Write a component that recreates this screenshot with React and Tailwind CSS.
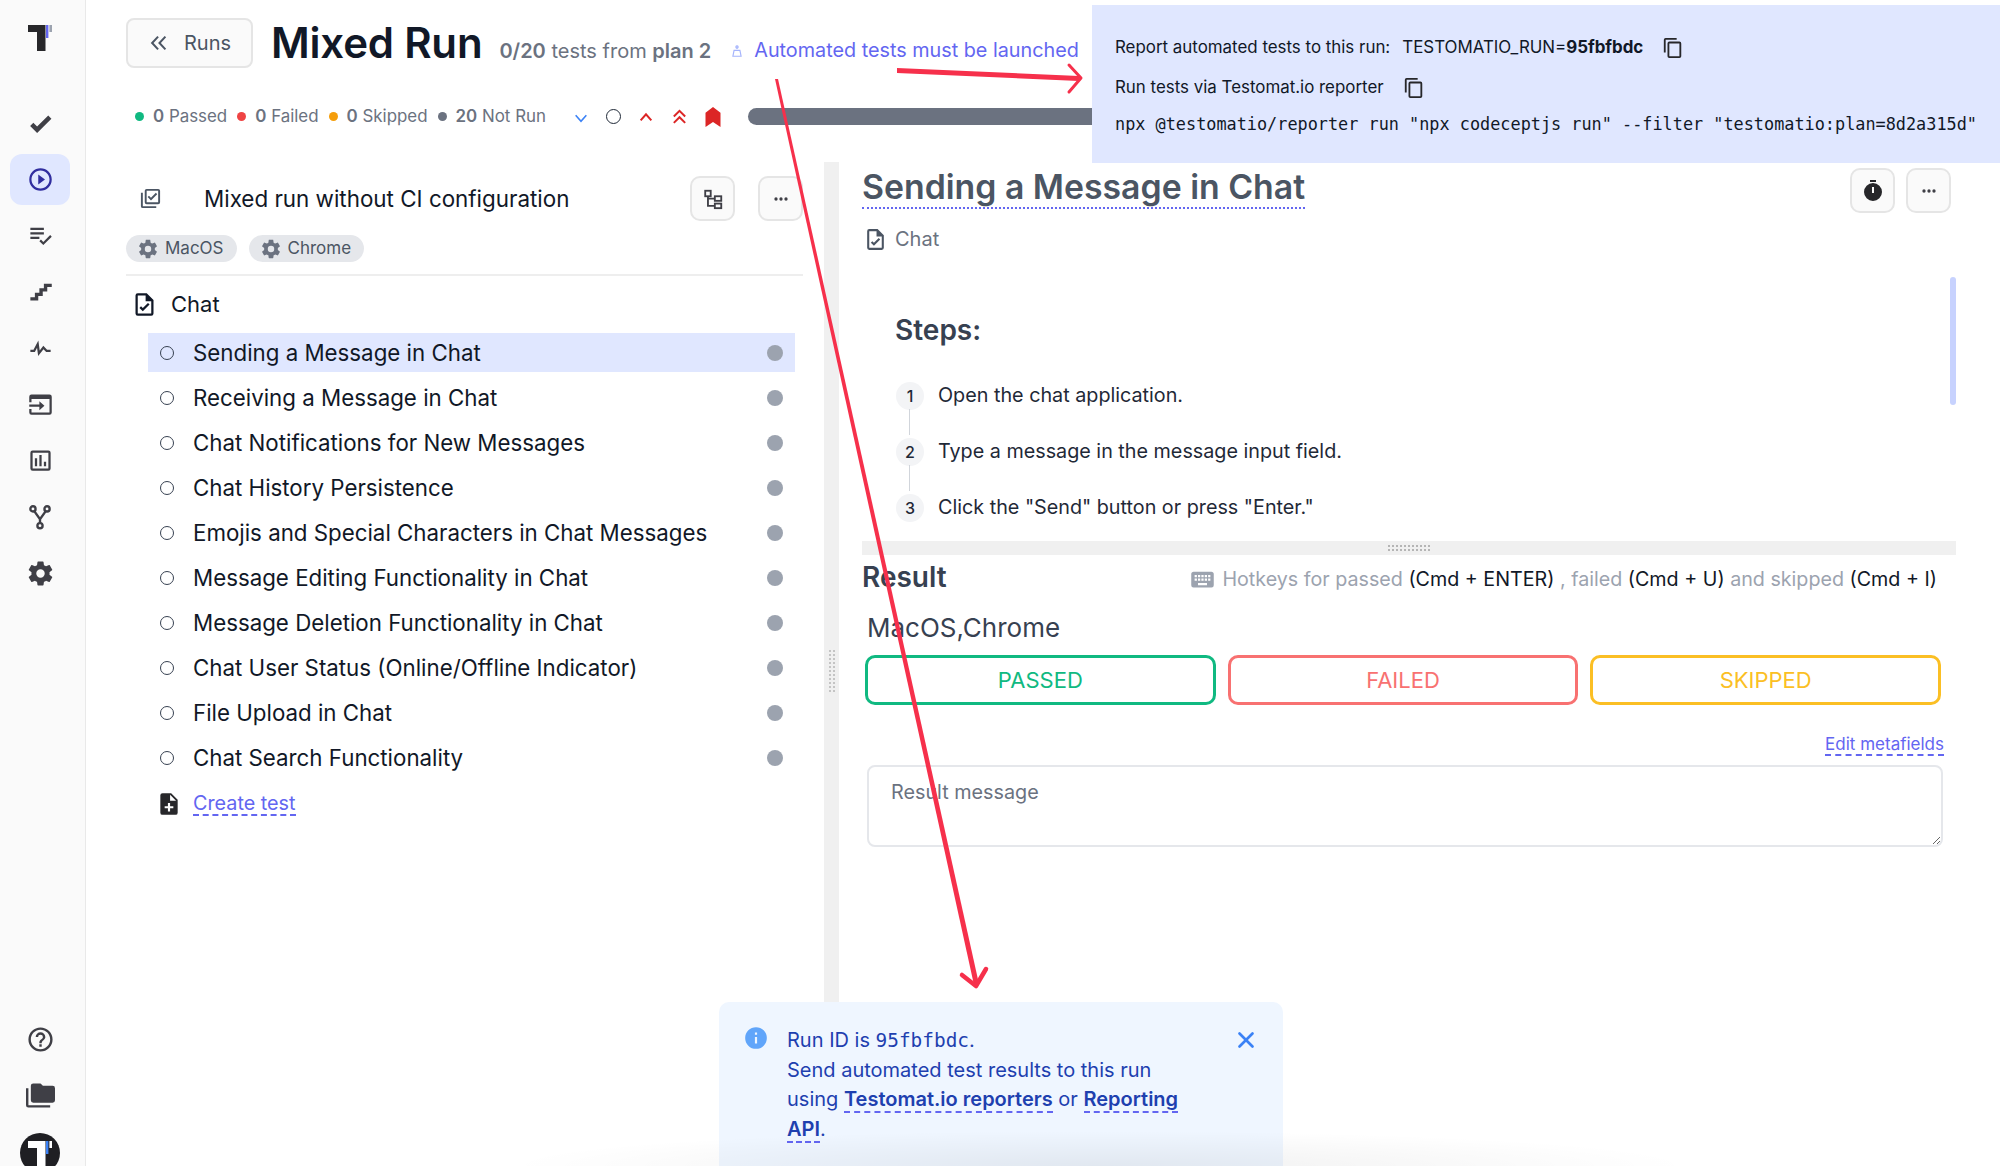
import React from 'react';
import { X } from 'lucide-react';

const M = ({ d, className = '' }) => (
  <svg viewBox="0 0 24 24" fill="currentColor" className={className}><path d={d} /></svg>
);
const P = {
  check: 'M9,20.42L2.79,14.21L5.62,11.38L9,14.77L18.88,4.88L21.71,7.71L9,20.42Z',
  play: 'M10,16.5L16,12L10,7.5V16.5M12,2A10,10 0 0,0 2,12A10,10 0 0,0 12,22A10,10 0 0,0 22,12A10,10 0 0,0 12,2M12,20C7.59,20 4,16.41 4,12C4,7.59 7.59,4 12,4C16.41,4 20,7.59 20,12C20,16.41 16.41,20 12,20Z',
  list: 'M3 5H15V7H3V5M3 9H15V11H3V9M3 13H11V15H3V13M14.5 20.5L11 17L12.4 15.6L14.5 17.7L20.6 11.6L22 13L14.5 20.5Z',
  stairs: 'M15,5V9H11V13H7V17H3V20H10V16H14V12H18V8H22V5H15Z',
  pulse: 'M3,13H5.79L10.1,4.79L11.28,13.75L14.5,9.66L17.83,13H21V15H17L14.67,12.67L9.92,18.73L8.94,11.31L7,15H3V13Z',
  importBox: 'M4 3H20A2 2 0 0 1 22 5V19A2 2 0 0 1 20 21H4A2 2 0 0 1 2 19V16H4V19H20V7H4V10H2V5A2 2 0 0 1 4 3M2 12H11V9L15.5 13L11 17V14H2V12Z',
  poll: 'M5 3H19A2 2 0 0 1 21 5V19A2 2 0 0 1 19 21H5A2 2 0 0 1 3 19V5A2 2 0 0 1 5 3M5 5V19H19V5H5M7 10H9V17H7V10M11 7H13V17H11V7M15 13H17V17H15V13Z',
  cog: 'M12,15.5A3.5,3.5 0 0,1 8.5,12A3.5,3.5 0 0,1 12,8.5A3.5,3.5 0 0,1 15.5,12A3.5,3.5 0 0,1 12,15.5M19.43,12.97C19.47,12.65 19.5,12.33 19.5,12C19.5,11.67 19.47,11.34 19.43,11L21.54,9.37C21.73,9.22 21.78,8.95 21.66,8.73L19.66,5.27C19.54,5.05 19.27,4.96 19.05,5.05L16.56,6.05C16.04,5.66 15.5,5.32 14.87,5.07L14.5,2.42C14.46,2.18 14.25,2 14,2H10C9.75,2 9.54,2.18 9.5,2.42L9.13,5.07C8.5,5.32 7.96,5.66 7.44,6.05L4.95,5.05C4.73,4.96 4.46,5.05 4.34,5.27L2.34,8.73C2.21,8.95 2.27,9.22 2.46,9.37L4.57,11C4.53,11.34 4.5,11.67 4.5,12C4.5,12.33 4.53,12.65 4.57,12.97L2.46,14.63C2.27,14.78 2.21,15.05 2.34,15.27L4.34,18.73C4.46,18.95 4.73,19.03 4.95,18.95L7.44,17.94C7.96,18.34 8.5,18.68 9.13,18.93L9.5,21.58C9.54,21.82 9.75,22 10,22H14C14.25,22 14.46,21.82 14.5,21.58L14.87,18.93C15.5,18.67 16.04,18.34 16.56,17.94L19.05,18.95C19.27,19.03 19.54,18.95 19.66,18.73L21.66,15.27C21.78,15.05 21.73,14.78 21.54,14.63L19.43,12.97Z',
  help: 'M11,18H13V16H11V18M12,2A10,10 0 0,0 2,12A10,10 0 0,0 12,22A10,10 0 0,0 22,12A10,10 0 0,0 12,2M12,20C7.59,20 4,16.41 4,12C4,7.59 7.59,4 12,4C16.41,4 20,7.59 20,12C20,16.41 16.41,20 12,20M12,6A4,4 0 0,0 8,10H10A2,2 0 0,1 12,8A2,2 0 0,1 14,10C14,12 11,11.75 11,15H13C13,12.75 16,12.5 16,10A4,4 0 0,0 12,6Z',
  folder: 'M22,4H14L12,2H6A2,2 0 0,0 4,4V16A2,2 0 0,0 6,18H22A2,2 0 0,0 24,16V6A2,2 0 0,0 22,4M2,6H0V20A2,2 0 0,0 2,22H20V20H2V6Z',
  copy: 'M19,21H8V7H19M19,5H8A2,2 0 0,0 6,7V21A2,2 0 0,0 8,23H19A2,2 0 0,0 21,21V7A2,2 0 0,0 19,5M16,1H4A2,2 0 0,0 2,3V17H4V3H16V1Z',
  info: 'M13,9H11V7H13M13,17H11V11H13M12,2A10,10 0 0,0 2,12A10,10 0 0,0 22,12A10,10 0 0,0 12,2Z',
  fileCheck: 'M14,2H6A2,2 0 0,0 4,4V20A2,2 0 0,0 6,22H18A2,2 0 0,0 20,20V8L14,2M18,20H6V4H13V9H18V20M10.5,18L7.5,15L8.9,13.6L10.5,15.2L15.1,10.6L16.5,12L10.5,18Z',
  filePlus: 'M14,2H6A2,2 0 0,0 4,4V20A2,2 0 0,0 6,22H18A2,2 0 0,0 20,20V8L14,2M11,11H13V14H16V16H13V19H11V16H8V14H11V11M13,9V3.5L18.5,9H13Z',
  multi: 'M20,2H8A2,2 0 0,0 6,4V16A2,2 0 0,0 8,18H20A2,2 0 0,0 22,16V4A2,2 0 0,0 20,2M20,16H8V4H20V16M4,6H2V20A2,2 0 0,0 4,22H18V20H4V6M12.5,14L9,10.5L10.4,9.1L12.5,11.2L17.6,6.1L19,7.5L12.5,14Z',
  timer: 'M15,1H9V3H15V1M12,4A9,9 0 0,0 3,13A9,9 0 0,0 12,22A9,9 0 0,0 21,13A9,9 0 0,0 12,4M13,14H11V8H13V14Z',
  keyboard: 'M19,10H17V8H19M19,13H17V11H19M16,10H14V8H16M16,13H14V11H16M16,17H8V15H16M7,10H5V8H7M7,13H5V11H7M8,11H10V13H8M8,8H10V10H8M11,11H13V13H11M11,8H13V10H11M20,5H4C2.89,5 2,5.89 2,7V17A2,2 0 0,0 4,19H20A2,2 0 0,0 22,17V7C22,5.89 21.1,5 20,5Z',
};

const Logo = ({ className = '', bar = '#6366f1', tip = '#9ca3af', t = '#27272a' }) => (
  <svg viewBox="0 0 24 26" className={className}>
    <path d="M0 0H17.5V26H9V7H0Z" fill={t} />
    <rect x="18" y="0" width="2.4" height="13" fill={bar} />
    <rect x="21.4" y="0" width="2.6" height="7" fill={tip} />
  </svg>
);

const navTop = [P.check, P.play, P.list, P.stairs, P.pulse, P.importBox, P.poll];

const Fork = ({ className = '' }) => (
  <svg viewBox="0 0 24 24" fill="none" stroke="currentColor" strokeWidth="2.2" className={className}>
    <circle cx="5.5" cy="4.5" r="2.4" /><circle cx="18.5" cy="4.5" r="2.4" /><circle cx="12" cy="20" r="2.4" />
    <path d="M6.7 6.6L12 14L17.3 6.6M12 14V17.6" />
  </svg>
);

const Tree = ({ className = '' }) => (
  <svg viewBox="0 0 24 24" fill="none" stroke="currentColor" strokeWidth="2" className={className}>
    <rect x="3.5" y="3" width="6" height="6" />
    <rect x="14" y="9" width="7" height="5" />
    <rect x="14" y="17" width="7" height="5" />
    <path d="M6.5 9V19.5H14M6.5 11.5H14" />
  </svg>
);

function Sidebar() {
  return (
    <aside className="w-[86px] shrink-0 h-full bg-[#fafafa] border-r border-[#e9e9e9] pr-[5px] flex flex-col items-center text-[#3f3f46]">
      <Logo className="w-[24px] h-[26px] mt-[25px] mb-[54px]" />
      <div className="flex flex-col items-center gap-[20.3px] w-full">
        {navTop.map((d, i) => (
          <div key={i} className={`w-[60px] flex items-center justify-center ${i === 1 ? 'bg-[#e0e7ff] rounded-[12px] h-[51px] -my-[7.5px] text-[#312e9f]' : 'h-[36px]'}`}>
            <M d={d} className="w-[27px] h-[27px]" />
          </div>
        ))}
        <div className="h-[36px] flex items-center justify-center"><Fork className="w-[26px] h-[26px]" /></div>
        <div className="h-[36px] flex items-center justify-center"><M d={P.cog} className="w-[29px] h-[29px]" /></div>
      </div>
      <div className="mt-auto flex flex-col items-center">
        <M d={P.help} className="w-[29px] h-[29px] mb-[27px]" />
        <M d={P.folder} className="w-[29px] h-[29px] mb-[23px]" />
        <div className="w-[40px] h-[40px] rounded-full bg-[#1f1f23] flex justify-center pt-[7px] -mb-[7px]">
          <Logo className="w-[24px] h-[28px]" t="#ffffff" bar="#3b82f6" tip="#ffffff" />
        </div>
      </div>
    </aside>
  );
}

const Stat = ({ c, n, l }) => (
  <span className="flex items-center gap-[9px]">
    <span className={`w-[9px] h-[9px] rounded-full ${c}`} />
    <span className="text-[#6b7280]"><b className="font-semibold">{n}</b> {l}</span>
  </span>
);

function Header() {
  return (
    <>
      <div className="flex items-center h-[49px] mt-[18px] whitespace-nowrap">
        <button className="w-[127px] h-[50px] rounded-[8px] border-2 border-[#e5e5e5] bg-[#fafafa] flex items-center justify-center gap-[14px] text-[20px] text-[#4b5563]">
          <svg viewBox="0 0 24 24" fill="none" stroke="currentColor" strokeWidth="2.2" className="w-[22px] h-[22px]"><path d="M11 5L4.5 12L11 19M19 5L12.5 12L19 19" /></svg>
          Runs
        </button>
        <h1 className="ml-[18px] text-[42px] leading-none font-semibold text-[#111827] tracking-[-0.2px]">Mixed Run</h1>
        <span className="ml-[17px] mt-[17px] text-[20px] text-[#6b7280]"><b className="font-semibold">0/20</b> tests from <b className="font-semibold">plan 2</b></span>
        <span className="ml-[19px] mt-[17px] flex items-center gap-[10px] text-[19.8px] text-[#6366f1]">
          <svg viewBox="0 0 24 24" fill="none" stroke="#a5b4fc" strokeWidth="2" className="w-[14px] h-[14px]"><path d="M12 3V8M5 21H19L17 11H7Z" /><circle cx="12" cy="5" r="2" /></svg>
          Automated tests must be launched
        </span>
      </div>
      <div className="flex items-center h-[17px] mt-[41px] text-[16.9px] whitespace-nowrap">
        <div className="ml-[9px] flex items-center gap-[10px]">
          <Stat c="bg-[#10b981]" n="0" l="Passed" />
          <Stat c="bg-[#ef4444]" n="0" l="Failed" />
          <Stat c="bg-[#f59e0b]" n="0" l="Skipped" />
          <Stat c="bg-[#6b7280]" n="20" l="Not Run" />
        </div>
        <div className="ml-[27px] flex items-center gap-[17px]">
          <svg viewBox="0 0 24 24" fill="none" stroke="#3b82f6" strokeWidth="2.4" className="w-[16px] h-[16px] mt-[2px]"><path d="M4 8L12 17L20 8" /></svg>
          <span className="w-[15px] h-[15px] rounded-full border-[1.5px] border-[#1f2937]" />
          <svg viewBox="0 0 24 24" fill="none" stroke="#dc2626" strokeWidth="3" className="w-[16px] h-[16px]"><path d="M4 17L12 8L20 17" /></svg>
          <svg viewBox="0 0 24 24" fill="none" stroke="#dc2626" strokeWidth="2.8" className="w-[17px] h-[17px]"><path d="M4 12L12 4L20 12M4 21L12 13L20 21" /></svg>
          <svg viewBox="0 0 24 24" fill="#dc2626" className="w-[18px] h-[20px] -ml-[1px]" preserveAspectRatio="none"><path d="M12 0L22 7V24L12 18L2 24V7Z" /></svg>
        </div>
        <div className="ml-[26px] flex-1 h-[17px] rounded-l-full bg-[#6b7280]" />
      </div>
    </>
  );
}

const tests = [
  'Sending a Message in Chat', 'Receiving a Message in Chat', 'Chat Notifications for New Messages', 'Chat History Persistence',
  'Emojis and Special Characters in Chat Messages', 'Message Editing Functionality in Chat', 'Message Deletion Functionality in Chat',
  'Chat User Status (Online/Offline Indicator)', 'File Upload in Chat', 'Chat Search Functionality',
];

const IconBtn = ({ children, className = '' }) => (
  <button className={`w-[45px] h-[45px] rounded-[10px] border-2 border-[#e5e5e5] bg-[#fafafa] flex items-center justify-center text-[#3f3f46] ${className}`}>{children}</button>
);
const More = () => (
  <svg viewBox="0 0 24 24" fill="currentColor" className="w-[20px] h-[20px]"><circle cx="6" cy="12" r="2" /><circle cx="12" cy="12" r="2" /><circle cx="18" cy="12" r="2" /></svg>
);

const Tag = ({ children }) => (
  <span className="h-[27px] px-[13px] rounded-full bg-[#e5e7eb] flex items-center gap-[6px] text-[17px] text-[#4b5563]">
    <M d={P.cog} className="w-[22px] h-[22px] text-[#6b7280] -ml-[2px]" />{children}
  </span>
);

function LeftPane() {
  return (
    <section className="w-[677px] shrink-0 pt-[14px]">
      <div className="flex items-center h-[45px]">
        <M d={P.multi} className="w-[23px] h-[23px] ml-[13px] text-[#4b5563]" />
        <span className="ml-[42px] text-[22.4px] text-[#111827]">Mixed run without CI configuration</span>
        <IconBtn className="ml-auto"><Tree className="w-[22px] h-[22px]" /></IconBtn>
        <IconBtn className="ml-[23px]"><More /></IconBtn>
      </div>
      <div className="flex gap-[12px] mt-[14px]"><Tag>MacOS</Tag><Tag>Chrome</Tag></div>
      <div className="border-t-2 border-[#eeeeee] mt-[12px]" />
      <div className="flex items-center h-[27px] mt-[14.5px] ml-[5px] text-[22px] text-[#111827]">
        <M d={P.fileCheck} className="w-[27px] h-[27px] text-[#111827]" />
        <span className="ml-[13px]">Chat</span>
      </div>
      <ul className="mt-[15.5px] ml-[22px] w-[647px]">
        {tests.map((t, i) => (
          <li key={t} className={`flex items-center h-[39px] mb-[6px] pl-[12px] pr-[12px] ${i === 0 ? 'bg-[#e0e7ff]' : ''}`}>
            <span className="w-[14px] h-[14px] rounded-full border-[1.5px] border-[#374151]" />
            <span className="ml-[19px] text-[22.3px] text-[#111827] whitespace-nowrap">{t}</span>
            <span className="ml-auto w-[16px] h-[16px] rounded-full bg-[#9ca3af]" />
          </li>
        ))}
      </ul>
      <div className="ml-[30px] mt-[13px] flex items-center gap-[11px] h-[27px]">
        <M d={P.filePlus} className="w-[26px] h-[26px] text-[#27272a]" />
        <a className="text-[19.8px] text-[#6366f1] border-b-2 border-dashed border-[#6366f1] leading-[22px]">Create test</a>
      </div>
    </section>
  );
}

const steps = ['Open the chat application.', 'Type a message in the message input field.', 'Click the "Send" button or press "Enter."'];

function RightPane() {
  return (
    <section className="flex-1 min-w-0 pl-[23px] pr-[44px] pt-[1px]">
      <div className="flex items-start h-[44px]">
        <h2 className="text-[33.8px] pt-[4px] leading-[40px] font-semibold text-[#4b5563] border-b-2 border-dotted border-[#6366f1] whitespace-nowrap">Sending a Message in Chat</h2>
        <IconBtn className="ml-auto mt-[5px]"><M d={P.timer} className="w-[24px] h-[24px] text-[#27272a]" /></IconBtn>
        <IconBtn className="ml-[11px] mr-[5px] mt-[5px]"><More /></IconBtn>
      </div>
      <div className="flex items-center gap-[7px] mt-[17px] ml-[2px] text-[20px] text-[#6b7280]">
        <M d={P.fileCheck} className="w-[25px] h-[25px] text-[#4b5563] -ml-[1px]" />Chat
      </div>
      <div className="relative h-[287px]">
        <div className="absolute right-0 top-[23px] w-[6px] h-[128px] rounded-full bg-[#c7d2fe]" />
        <h3 className="absolute left-[33px] top-[55px] text-[28px] font-semibold text-[#374151]">Steps:</h3>
        <ol className="absolute left-[34px] top-[114px]">
          {steps.map((s, i) => (
            <li key={s} className="relative flex items-center h-[56px]">
              {i < 2 && <span className="absolute left-[13px] top-[41px] w-px h-[26px] bg-[#d1d5db]" />}
              <span className="w-[28px] h-[28px] rounded-full bg-[#f3f4f6] flex items-center justify-center text-[16px] font-medium text-[#1f2937]">{i + 1}</span>
              <span className="ml-[14px] text-[19.75px] text-[#1f2937]">{s}</span>
            </li>
          ))}
        </ol>
      </div>
      <div className="h-[14px] bg-[#f0f0f0] flex items-center justify-center">
        <span className="w-[44px] h-[8px] bg-[radial-gradient(#b5b5b5_1px,transparent_1.2px)] bg-[length:4px_4px]" />
      </div>
      <div className="flex items-center justify-between h-[44px] whitespace-nowrap">
        <h3 className="text-[28px] font-semibold text-[#374151]">Result</h3>
        <div className="flex items-center text-[19.7px] text-[#9ca3af] mr-[19px] mt-[6px]">
          <M d={P.keyboard} className="w-[27px] h-[27px] mr-[6px] text-[#9ca3af]" />
          <span>Hotkeys for passed&nbsp;<span className="text-[#111827]">(Cmd + ENTER)</span>&nbsp;, failed&nbsp;<span className="text-[#111827]">(Cmd + U)</span>&nbsp;and skipped&nbsp;<span className="text-[#111827]">(Cmd + I)</span></span>
        </div>
      </div>
      <div className="mt-[13px] ml-[5px] text-[26px] leading-[31px] text-[#374151]">MacOS,Chrome</div>
      <div className="mt-[12px] ml-[3px] mr-[15px] grid grid-cols-3 gap-[12px]">
        <button className="h-[50px] rounded-[10px] border-[3px] border-[#10b981] text-[22px] text-[#10b981]">PASSED</button>
        <button className="h-[50px] rounded-[10px] border-[3px] border-[#f87171] text-[22px] text-[#f87171]">FAILED</button>
        <button className="h-[50px] rounded-[10px] border-[3px] border-[#fbbf24] text-[22px] text-[#fbbf24]">SKIPPED</button>
      </div>
      <div className="flex justify-end mt-[30px] mr-[12px]">
        <a className="text-[17px] leading-[19px] text-[#6366f1] border-b-2 border-dashed border-[#6366f1]">Edit metafields</a>
      </div>
      <textarea placeholder="Result message" className="block mt-[9px] ml-[5px] w-[1076px] h-[82px] rounded-[8px] border-2 border-[#e5e7eb] px-[22px] py-[11px] text-[19.8px] placeholder:text-[#6b7280] outline-none" />
    </section>
  );
}

function Toast() {
  return (
    <div className="absolute left-[719px] bottom-0 w-[564px] h-[164px] rounded-t-[10px] bg-[#eff6ff] flex text-[20px] leading-[29.7px] text-[#1e40af]">
      <M d={P.info} className="w-[26px] h-[26px] ml-[24px] mt-[23px] text-[#60a5fa] shrink-0" />
      <div className="ml-[18px] mt-[24px] w-[420px]">
        <div>Run ID is <span className="font-['DejaVu_Sans_Mono',monospace] text-[19.4px]">95fbfbdc</span>.</div>
        <div>Send automated test results to this run</div>
        <div>using <a className="font-semibold border-b-2 border-dashed border-[#6366f1]">Testomat.io reporters</a> or <a className="font-semibold border-b-2 border-dashed border-[#6366f1]">Reporting API</a>.</div>
      </div>
      <X className="w-[26px] h-[26px] ml-[26px] mt-[25px] text-[#3b82f6] shrink-0" strokeWidth={2.5} />
    </div>
  );
}

function BluePanel() {
  return (
    <div className="absolute left-[1092px] top-[5px] w-[908px] h-[158px] bg-[#e0e7ff] pl-[23px] text-[16.9px] text-[#111827] whitespace-nowrap">
      <div className="flex items-center h-[24px] mt-[31px]">
        <span>Report automated tests to this run:</span>
        <span className="ml-[12px]">TESTOMATIO_RUN=<b className="font-bold">95fbfbdc</b></span>
        <M d={P.copy} className="w-[22px] h-[22px] ml-[19px] text-[#27272a]" />
      </div>
      <div className="flex items-center h-[24px] mt-[16px]">
        <span>Run tests via Testomat.io reporter</span>
        <M d={P.copy} className="w-[22px] h-[22px] ml-[19px] text-[#27272a]" />
      </div>
      <div className="mt-[12px] font-['DejaVu_Sans_Mono',monospace] text-[16.85px] leading-[24px]">npx @testomatio/reporter run "npx codeceptjs run" --filter "testomatio:plan=8d2a315d"</div>
    </div>
  );
}

function Arrows() {
  return (
    <svg className="absolute inset-0 w-[2000px] h-[1166px] pointer-events-none" viewBox="0 0 2000 1166" fill="none">
      <polygon points="775,79 778,79 979,984 974,985" fill="#f6304b" />
      <path d="M962 975L976 986L986 969" stroke="#f6304b" strokeWidth="4.5" strokeLinecap="round" strokeLinejoin="round" />
      <polygon points="897,68 897,73 1079,81 1079,76" fill="#f6304b" />
      <path d="M1069 65L1081 78L1069 92" stroke="#f6304b" strokeWidth="3" strokeLinecap="round" strokeLinejoin="round" />
    </svg>
  );
}

export default function App() {
  return (
    <div className="relative flex h-screen overflow-hidden bg-white font-['Inter',sans-serif]">
      <Sidebar />
      <main className="flex-1 min-w-0 flex flex-col pl-[40px]">
        <Header />
        <div className="flex flex-1 min-h-0 mt-[37px]">
          <LeftPane />
          <div className="w-[15px] ml-[21px] bg-[#f0f0f0] flex items-center justify-center">
            <span className="w-[8px] h-[44px] bg-[radial-gradient(#c4c4c4_1px,transparent_1.2px)] bg-[length:4px_4px] mt-[14px]" />
          </div>
          <RightPane />
        </div>
      </main>
      <BluePanel />
      <Arrows />
      <Toast />
      <div className="absolute left-[500px] w-[1200px] bottom-0 h-[36px] bg-[radial-gradient(ellipse_at_bottom,#0000000f,transparent_70%)] pointer-events-none" />
    </div>
  );
}
